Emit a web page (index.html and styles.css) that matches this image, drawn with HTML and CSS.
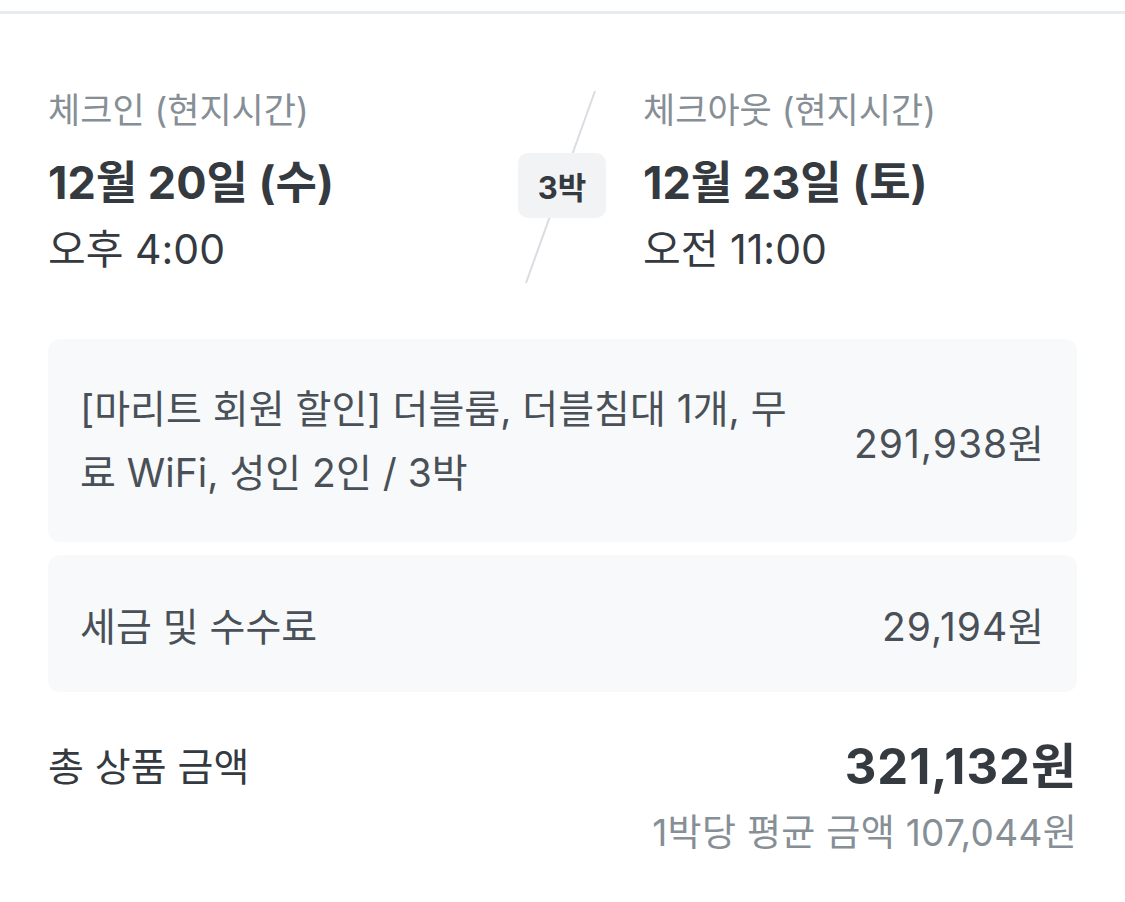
FILE: index.html
```html
<!DOCTYPE html>
<html lang="ko">
<head>
<meta charset="utf-8">
<link rel="stylesheet" href="styles.css">
</head>
<body>
<div class="page">
  <div class="top-rule"></div>
  <section class="stay">
    <div class="stay-col stay-in">
      <div class="stay-label">체크인 (현지시간)</div>
      <div class="stay-date">12월 20일 (수)</div>
      <div class="stay-time">오후 4:00</div>
    </div>
    <div class="stay-mid">
      <svg class="slash" width="80" height="194" viewBox="0 0 80 194" aria-hidden="true">
        <line x1="73" y1="1" x2="4" y2="193" stroke="#d9dde2" stroke-width="2"/>
      </svg>
      <div class="nights">3박</div>
    </div>
    <div class="stay-col stay-out">
      <div class="stay-label">체크아웃 (현지시간)</div>
      <div class="stay-date">12월 23일 (토)</div>
      <div class="stay-time">오전 11:00</div>
    </div>
  </section>

  <div class="price-card room">
    <div class="price-name">[마리트 회원 할인] 더블룸, 더블침대 1개, 무료 WiFi, 성인 2인 / 3박</div>
    <div class="price-val">291,938원</div>
  </div>
  <div class="price-card fee">
    <div class="price-name">세금 및 수수료</div>
    <div class="price-val">29,194원</div>
  </div>

  <div class="total">
    <div class="total-label">총 상품 금액</div>
    <div class="total-val">321,132원</div>
  </div>
  <div class="avg">1박당 평균 금액 107,044원</div>
</div>
</body>
</html>
```

FILE: styles.css
```css
* { box-sizing: border-box; }
html, body { margin: 0; padding: 0; background: #ffffff; }
body {
  font-family: Inter, "Noto Sans CJK KR", sans-serif;
  color: #343a40;
}
.page {
  width: 1125px;
  padding-top: 11px;
}
.top-rule {
  height: 3px;
  background: #e9ecef;
}
.stay {
  display: flex;
  padding: 74px 48px 0 48px;
  height: 268px;
}
.stay-col { display: flex; flex-direction: column; }
.stay-in { flex: 1; }
.stay-out { width: 434px; }
.stay-label {
  font-size: 35px;
  line-height: 44px;
  color: #868e96;
}
.stay-date {
  font-size: 45px;
  line-height: 56px;
  font-weight: 700;
  color: #343a40;
  margin-top: 23px;
}
.stay-time {
  font-size: 41px;
  line-height: 50px;
  color: #343a40;
  margin-top: 13px;
}
.stay-mid {
  position: relative;
  width: 88px;
  margin-right: 37px;
  margin-top: 2px;
  display: flex;
  align-items: center;
  justify-content: center;
  height: 192px;
}
.slash {
  position: absolute;
  left: 4px;
  top: 0;
}
.nights {
  position: relative;
  width: 88px;
  height: 65px;
  margin-top: -2px;
  border-radius: 10px;
  background: #f1f3f5;
  font-size: 31px;
  font-weight: 700;
  color: #343a40;
  display: flex;
  align-items: center;
  justify-content: center;
}
.price-card {
  margin: 0 48px;
  background: #f8f9fa;
  border-radius: 12px;
  display: flex;
  align-items: center;
  justify-content: space-between;
  padding: 0 32px;
  color: #495057;
  font-size: 39px;
}
.room {
  margin-top: 57px;
  padding-top: 38px;
  padding-bottom: 37px;
}
.room .price-name {
  width: 720px;
  line-height: 64px;
}
.fee {
  margin-top: 13px;
  height: 137px;
}
.price-val { white-space: nowrap; letter-spacing: 1px; }
.total {
  margin: 45px 48px 0 48px;
  display: flex;
  justify-content: space-between;
  align-items: flex-start;
}
.total-label {
  font-size: 39px;
  line-height: 60px;
  color: #343a40;
}
.total-val {
  font-size: 49px;
  line-height: 60px;
  font-weight: 700;
  color: #343a40;
  letter-spacing: 1px;
}
.avg {
  margin: 11px 48px 0 48px;
  text-align: right;
  font-size: 37px;
  line-height: 50px;
  color: #868e96;
  letter-spacing: 0.3px;
}
```
